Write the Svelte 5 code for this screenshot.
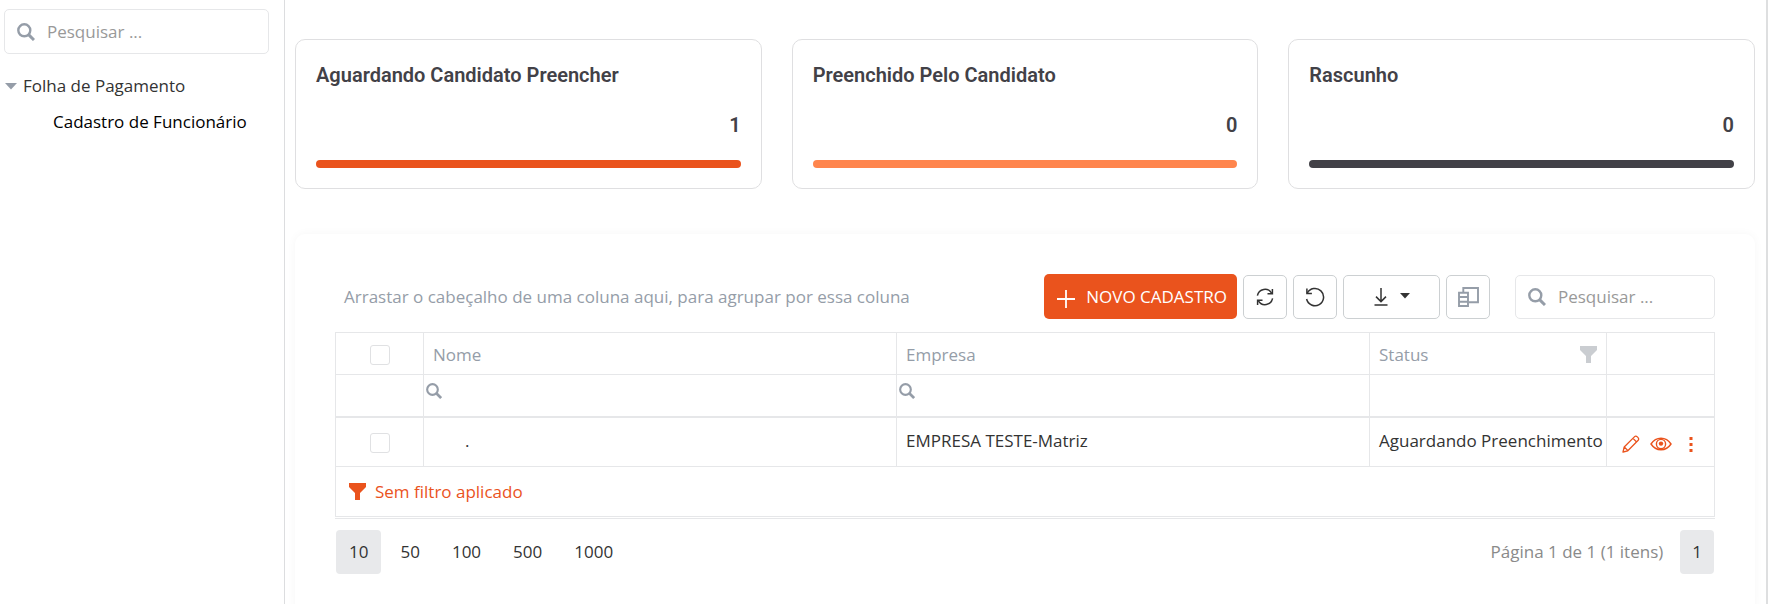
<script>
  const cards = [
    { title: 'Aguardando Candidato Preencher', count: 1, tone: 'strong' },
    { title: 'Preenchido Pelo Candidato', count: 0, tone: 'soft' },
    { title: 'Rascunho', count: 0, tone: 'dark' }
  ];
  const rows = [{ nome: '.', empresa: 'EMPRESA TESTE-Matriz', status: 'Aguardando Preenchimento' }];
  const sizes = [10, 50, 100, 500, 1000];
  let pageSize = $state(10);
</script>

{#snippet searchIcon(size)}
  <svg class="search-icon" width={size} height={size} viewBox="0 0 18 18" fill="none" stroke="currentColor" aria-hidden="true">
    <circle cx="7.3" cy="7.3" r="6" stroke-width="2.4" />
    <path d="M11.6 11.6 17 17" stroke-width="3" />
  </svg>
{/snippet}

{#snippet funnel()}
  <svg width="17" height="17" viewBox="0 0 17 17" fill="currentColor" aria-hidden="true">
    <path d="M0 0h17v4L11 10v7H6v-7L0 4z" />
  </svg>
{/snippet}

<div class="app">
  <aside class="sidebar">
    <label class="search">
      {@render searchIcon(18)}
      <input type="text" placeholder="Pesquisar ..." aria-label="Pesquisar no menu" />
    </label>
    <nav>
      <button class="group" type="button">
        <svg width="12" height="7" viewBox="0 0 12 7" aria-hidden="true"><path d="M0 0h12L6 6.5z" fill="#959da8" /></svg>
        <span>Folha de Pagamento</span>
      </button>
      <a class="leaf" href="#cadastro">Cadastro de Funcionário</a>
    </nav>
  </aside>

  <main>
    <section class="cards">
      {#each cards as card}
        <article class="card">
          <h2>{card.title}</h2>
          <p>{card.count}</p>
          <div class="bar {card.tone}"></div>
        </article>
      {/each}
    </section>

    <section class="panel">
      <div class="toolbar">
        <span class="hint">Arrastar o cabeçalho de uma coluna aqui, para agrupar por essa coluna</span>
        <button class="primary" type="button">
          <svg width="20" height="24" viewBox="0 0 20 24" fill="none" stroke="currentColor" stroke-width="1.8" aria-hidden="true"><path d="M10 5v18M1 14h18" /></svg>
          <span>NOVO CADASTRO</span>
        </button>
        <button class="tool" type="button" aria-label="Atualizar">
          <svg width="20" height="20" viewBox="0 0 20 20" fill="none" stroke="currentColor" stroke-width="1.5" aria-hidden="true">
            <path d="M2.4 8.6A7.7 7.7 0 0 1 16.6 6.2M17.6 11.4A7.7 7.7 0 0 1 3.4 13.8" />
            <path d="M17.4 2v4.8h-4.9M2.6 18v-4.8h4.9" />
          </svg>
        </button>
        <button class="tool" type="button" aria-label="Restaurar">
          <svg width="20" height="20" viewBox="0 0 20 20" fill="none" stroke="currentColor" stroke-width="1.5" aria-hidden="true">
            <path d="M2.3 6.2A8.6 8.6 0 1 1 1.6 12" />
            <path d="M1.9 1.6v5h5" />
          </svg>
        </button>
        <button class="tool wide" type="button" aria-label="Exportar">
          <svg width="14" height="18" viewBox="0 0 14 18" fill="none" stroke="currentColor" stroke-width="1.5" aria-hidden="true">
            <path d="M7 0v13.5M2 8.6l5 5 5-5M.5 17h13" />
          </svg>
          <svg width="10" height="8" viewBox="0 0 10 8" fill="currentColor" aria-hidden="true"><path d="M0 0h10L5 5.5z" /></svg>
        </button>
        <button class="tool muted" type="button" aria-label="Colunas">
          <svg width="21" height="20" viewBox="0 0 21 20" fill="none" stroke="currentColor" stroke-width="1.9" aria-hidden="true">
            <path d="M5.300 5V1H20v14.200H11" />
            <path d="M1 5.700h9v13.300H1zM1 10h9M1 14.700h9" />
          </svg>
        </button>
        <label class="search grid-search">
          {@render searchIcon(18)}
          <input type="text" placeholder="Pesquisar ..." aria-label="Pesquisar na tabela" />
        </label>
      </div>

      <div class="grid">
        <table>
          <colgroup>
            <col class="c-check" /><col /><col /><col class="c-status" /><col class="c-actions" />
          </colgroup>
          <thead>
            <tr class="head">
              <th class="center"><input type="checkbox" aria-label="Selecionar todos" /></th>
              <th>Nome</th>
              <th>Empresa</th>
              <th><div class="th-filter"><span>Status</span><button class="plain faded" type="button" aria-label="Filtrar status">{@render funnel()}</button></div></th>
              <th aria-label="Ações"></th>
            </tr>
            <tr class="filters">
              <td></td>
              <td><label class="cell-filter">{@render searchIcon(16)}<input type="text" aria-label="Filtrar nome" /></label></td>
              <td><label class="cell-filter">{@render searchIcon(16)}<input type="text" aria-label="Filtrar empresa" /></label></td>
              <td></td>
              <td></td>
            </tr>
          </thead>
          <tbody>
            {#each rows as row}
              <tr class="data">
                <td class="center"><input type="checkbox" aria-label="Selecionar linha" /></td>
                <td class="nome">{row.nome}</td>
                <td>{row.empresa}</td>
                <td>{row.status}</td>
                <td>
                  <div class="actions">
                    <button class="plain" type="button" aria-label="Editar">
                      <svg width="18" height="18" viewBox="0 0 18 18" fill="none" stroke="currentColor" stroke-width="1.3" stroke-linejoin="round" aria-hidden="true">
                        <path d="M1 17l1.200-5L12.600 1.600c1.600-1.600 5.200 1.800 3.600 3.600L5.800 15.800zM11 3.400l3.600 3.600M2.300 12l3.600 3.600" />
                      </svg>
                    </button>
                    <button class="plain" type="button" aria-label="Visualizar">
                      <svg width="22" height="14" viewBox="0 0 22 14" fill="none" stroke="currentColor" stroke-width="1.400" aria-hidden="true">
                        <path d="M1 7C6-.6 16-.6 21 7 16 14.600 6 14.600 1 7z" />
                        <circle cx="11" cy="7" r="4.600" />
                        <circle cx="11" cy="6.600" r="2.200" fill="currentColor" stroke="none" />
                      </svg>
                    </button>
                    <button class="plain" type="button" aria-label="Mais opções">
                      <svg width="18" height="16" viewBox="0 0 18 16" fill="currentColor" aria-hidden="true">
                        <path d="M7.500 1h3v3h-3zM7.500 7h3v3h-3zM7.500 13h3v3h-3z" />
                      </svg>
                    </button>
                  </div>
                </td>
              </tr>
            {/each}
          </tbody>
        </table>
        <button class="filter-panel" type="button">{@render funnel()}<span>Sem filtro aplicado</span></button>
      </div>

      <footer class="pager">
        <div class="sizes">
          {#each sizes as size}
            <button type="button" class:active={size === pageSize} onclick={() => (pageSize = size)}>{size}</button>
          {/each}
        </div>
        <div class="pages">
          <span>Página 1 de 1 (1 itens)</span>
          <button type="button" class="active">1</button>
        </div>
      </footer>
    </section>
  </main>
</div>

<style>
  :global(body) {
    background: #fff;
  }
  .app,
  .app * {
    box-sizing: border-box;
  }
  .app {
    display: flex;
    min-height: 100vh;
    border-right: 2px solid #dedfe0;
    font: 17px/24px 'Open Sans', 'Noto Sans', sans-serif;
    color: #333;
  }
  button,
  input {
    font: inherit;
    color: inherit;
  }
  button {
    margin: 0;
    padding: 0;
    border: 0;
    background: none;
    cursor: pointer;
  }
  svg {
    display: block;
    flex: none;
  }

  .sidebar {
    flex: 0 0 285px;
    min-width: 0;
    padding: 9px 15px 0 4px;
    border-right: 1px solid #dcdddf;
  }
  .search {
    display: flex;
    align-items: center;
    gap: 12px;
    height: 45px;
    padding: 0 12px;
    border: 1px solid #e6e7e9;
    border-radius: 5px;
  }
  .search-icon {
    color: #959da8;
  }
  .search input {
    flex: 1;
    width: 0;
    min-width: 0;
    padding: 0;
    border: 0;
    outline: 0;
    background: none;
  }
  .search input::placeholder {
    color: #999;
    opacity: 1;
  }
  nav {
    display: flex;
    flex-direction: column;
    padding-top: 14px;
  }
  .group {
    display: flex;
    align-items: center;
    gap: 6px;
    height: 36px;
    padding-left: 1px;
  }
  .leaf {
    padding-left: 49px;
    line-height: 36px;
    color: #000;
    text-decoration: none;
    white-space: nowrap;
  }

  main {
    flex: 1;
    min-width: 0;
    padding: 39px 11px 0 10px;
    display: flex;
    flex-direction: column;
    gap: 45px;
  }
  .cards {
    display: grid;
    grid-template-columns: repeat(3, 1fr);
    gap: 30px;
  }
  .card {
    padding: 20px;
    border: 1px solid #dfdfe1;
    border-radius: 10px;
    font: 600 20px/30px Roboto, sans-serif;
    color: #424147;
  }
  .card h2,
  .card p {
    margin: 0;
    font: inherit;
  }
  .card p {
    margin: 20px 0;
    text-align: right;
  }
  .bar {
    height: 8px;
    border-radius: 4px;
  }
  .strong {
    background: #ea531d;
  }
  .soft {
    background: #ff854d;
  }
  .dark {
    background: #424147;
  }

  .panel {
    flex: 1;
    padding: 40px;
    border-radius: 10px;
    box-shadow: 0 0 10px rgba(0, 0, 0, 0.04);
  }
  .toolbar {
    display: flex;
    align-items: center;
    gap: 6px;
    padding-bottom: 13px;
  }
  .hint {
    flex: 1;
    padding-left: 9px;
    color: #959da8;
    white-space: nowrap;
  }
  .primary {
    display: flex;
    align-items: center;
    gap: 10px;
    height: 45px;
    padding: 0 10px 0 12px;
    border-radius: 5px;
    background: #ea531d;
    color: #fff;
    white-space: nowrap;
  }
  .tool {
    display: flex;
    align-items: center;
    justify-content: center;
    gap: 12px;
    width: 44px;
    height: 44px;
    border: 1px solid #ccd0d2;
    border-radius: 5px;
  }
  .wide {
    width: 97px;
  }
  .muted {
    color: #959da8;
  }
  .grid-search {
    width: 200px;
    height: 44px;
    margin-left: 19px;
  }

  .grid {
    padding-bottom: 1px;
    border-bottom: 1px solid #e6e7e9;
  }
  table {
    width: 100%;
    border-collapse: separate;
    border-spacing: 0;
    table-layout: fixed;
    border-top: 1px solid #e6e7e9;
    border-left: 1px solid #e6e7e9;
  }
  .c-check {
    width: 88px;
  }
  .c-status {
    width: 237px;
  }
  .c-actions {
    width: 108px;
  }
  th,
  td {
    padding: 0 9px;
    border-right: 1px solid #e6e7e9;
    border-bottom: 1px solid #e6e7e9;
    font-weight: 400;
    text-align: left;
    white-space: nowrap;
  }
  .head th {
    height: 42px;
    padding-top: 2px;
    color: #959da8;
  }
  .filters td {
    height: 43px;
    padding: 0 2px;
    border-bottom-width: 2px;
  }
  .data td {
    height: 49px;
    padding-bottom: 2px;
  }
  .center {
    text-align: center;
  }
  .data .center {
    padding: 2px 9px 0;
  }
  .data .nome {
    padding-left: 41px;
  }
  input[type='checkbox'] {
    appearance: none;
    display: block;
    width: 20px;
    height: 20px;
    margin: 0 auto;
    border: 1px solid #e0e1e3;
    border-radius: 3px;
    background: #fff;
  }
  .th-filter {
    display: flex;
    align-items: center;
    justify-content: space-between;
  }
  .faded {
    color: #cacdd1;
  }
  .cell-filter {
    display: flex;
    align-items: center;
    gap: 6px;
    padding-bottom: 10px;
  }
  .cell-filter input {
    flex: 1;
    min-width: 0;
    height: 24px;
    padding: 0;
    border: 0;
    outline: 0;
    background: none;
  }
  .actions {
    display: flex;
    align-items: center;
    gap: 10px;
    padding: 6px 0 0 6px;
    color: #ea531d;
  }
  .filter-panel {
    display: flex;
    align-items: center;
    gap: 9px;
    width: 100%;
    height: 50px;
    padding: 0 13px;
    border: 1px solid #e6e7e9;
    border-top: 0;
    color: #ea531d;
  }

  .pager,
  .sizes,
  .pages {
    display: flex;
    align-items: center;
  }
  .pager {
    justify-content: space-between;
    padding: 11px 1px 0;
  }
  .sizes {
    gap: 6px;
  }
  .pages {
    gap: 17px;
    color: #8a8a8a;
  }
  .pager button {
    height: 44px;
    padding: 0 13px;
    border-radius: 4px;
    color: #333;
  }
  .pager .active {
    background: #e8e9eb;
  }
  .pages button {
    padding: 0 12px;
  }
</style>
